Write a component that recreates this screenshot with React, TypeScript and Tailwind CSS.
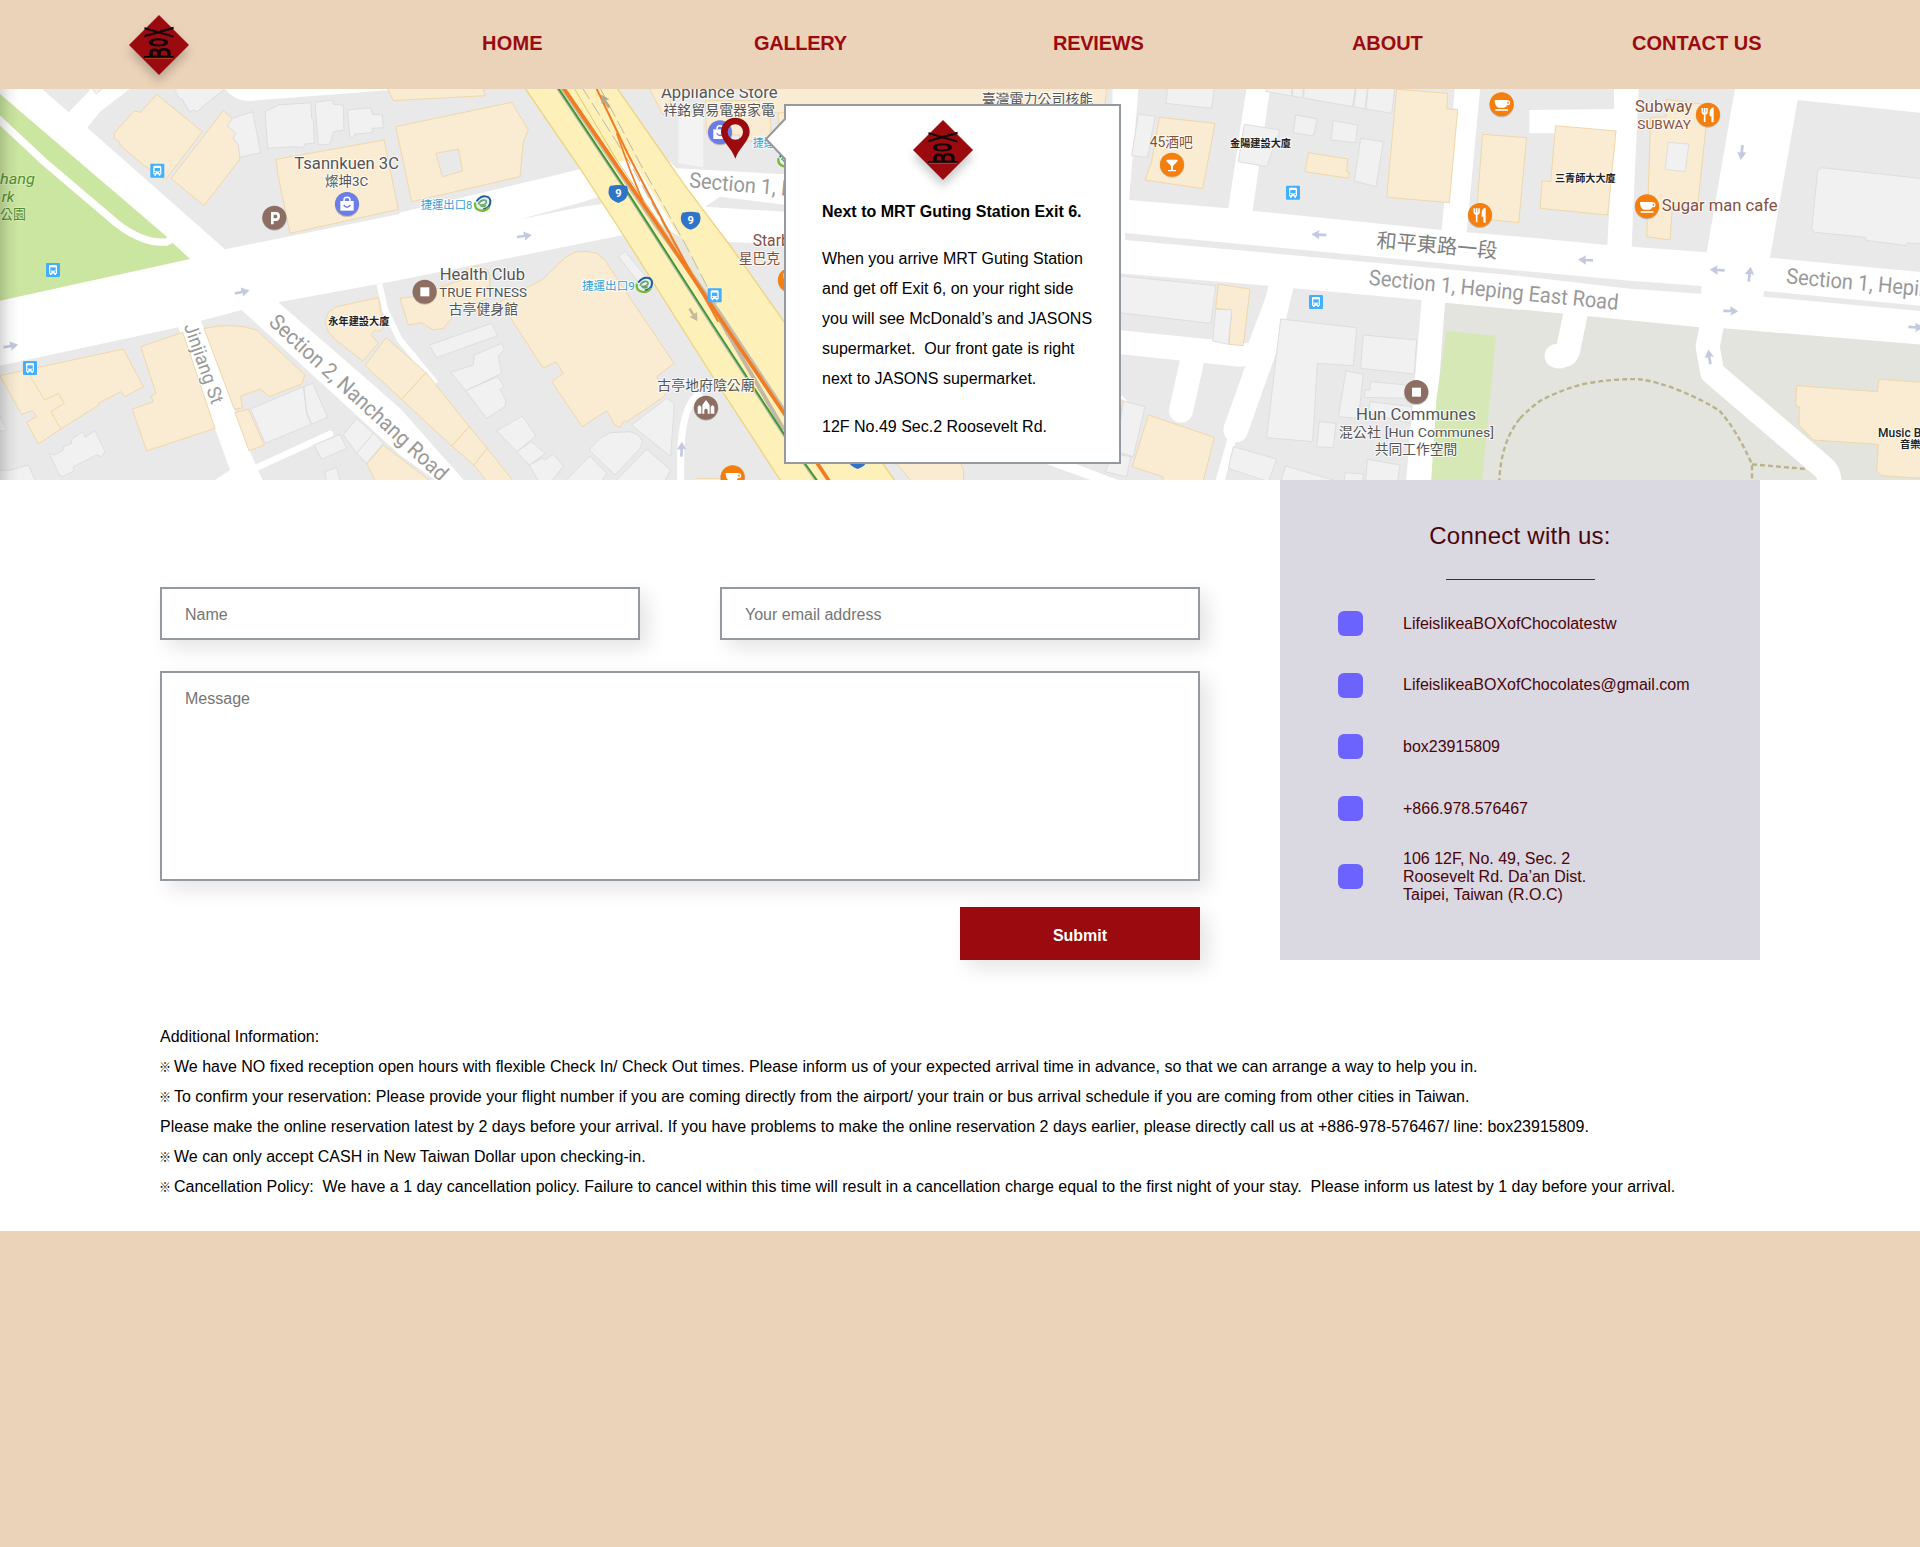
import React from "react";

const SANS = "font-['Liberation_Sans',Arial,sans-serif]";
const MAP_FONT = "Roboto, 'Noto Sans CJK TC', sans-serif";

type Pts = string[];

/* ---------- Brand mark ---------- */
function Logo() {
  return (
    <svg
      viewBox="0 0 60 60"
      className="block h-[60px] w-[60px] overflow-visible drop-shadow-[0_7px_5px_rgba(0,0,0,0.2)]"
    >
      <path d="M30 0L60 30L30 60L0 30Z" fill="#9b0a0f" />
      <g fontFamily="'Liberation Sans', Arial, sans-serif" fill="#120507" stroke="#120507">
        <text transform="translate(44.2 22.6) rotate(-90) scale(0.39 1)" fontSize="40.5" strokeWidth="1.2">X</text>
        <text transform="translate(38.3 31.4) rotate(-90) scale(0.44 1)" fontSize="24" strokeWidth="2.2">O</text>
        <text transform="translate(40.5 44) rotate(-90) scale(0.6 1)" fontSize="29" strokeWidth="1.4">B</text>
      </g>
      <path d="M15 42H44.6" stroke="#120507" strokeWidth="2" />
      <path d="M16 43.3H44" stroke="#b9763a" strokeWidth="0.6" />
    </svg>
  );
}

/* ---------- Map artwork (3 drawing units per pixel) ---------- */
function Shapes({ pts, kind }: { pts: Pts; kind: "tan" | "light" }) {
  const fill = kind === "tan" ? "#faecd3" : "#f1f1f1";
  const stroke = kind === "tan" ? "#efd8a9" : "#dedede";
  return (
    <g fill={fill} stroke={stroke} strokeWidth={3} strokeLinejoin="round">
      {pts.map((p) => (
        <polygon key={p} points={p} />
      ))}
    </g>
  );
}

const tanWest: Pts = [
  "470,43 607,155 497,298 433,257 360,195 358,185 343,175 343,160 402,93 422,97",
  "670,92 697,115 682,137 707,160 700,175 715,195 720,237 612,377 513,295",
  "828,238 1152,180 1195,388 870,460 834,285",
  "1160,20 1180,62 1457,47 1445,20",
  "0,887 370,807 430,920 375,950 363,935 295,970 295,976 185,1045 115,1092 80,1027 110,1010 97,992 65,1003",
  "422,800 548,757 645,1045 440,1113 397,987 460,965 453,948 468,940",
  "612,745 650,739 690,737 730,740 770,750 915,885 905,912 808,950 782,927 722,948 728,983 703,988",
  "705,998 745,987 793,1095 747,1112",
  "1135,653 1145,710 1150,745 1135,755 1125,750 1112,763 1135,790 1088,843 1005,778 985,755 975,725 985,697 1010,680",
  "1158,773 1278,878 1205,958 1095,857",
  "1278,878 1408,1040 1355,1098 1205,958",
  "1408,1040 1462,1105 1422,1155 1355,1098",
  "1462,1105 1545,1210 1465,1210 1422,1155",
  "1150,1095 1300,1210 1130,1210 1100,1152",
  "1187,140 1535,67 1585,150 1570,185 1560,290 1235,365 1200,200",
];
const lightWest: Pts = [
  "520,20 540,60 545,55 570,97 580,90 592,95 605,82 670,30 670,20",
  "275,20 288,42 315,20",
  "697,115 758,95 782,218 720,232 715,195 700,175 707,160 682,137",
  "795,95 835,75 933,68 935,115 940,118 943,190 915,192 910,203 882,200 803,205",
  "945,67 997,60 1000,73 1030,75 1032,150 1000,155 990,192 955,195",
  "1042,90 1112,83 1118,103 1147,105 1150,143 1118,145 1116,158 1065,162 1062,173 1050,173",
  "752,987 910,920 920,1000 933,1033 795,1090",
  "912,920 938,910 983,1012 935,1032 920,995",
  "148,1120 165,1125 192,1108 190,1100 215,1090 215,1078 248,1055 255,1072 285,1052 315,1115 305,1130 290,1125 220,1160 222,1172 190,1190 178,1185",
  "-5,1170 25,1172 85,1155 110,1210 -5,1210",
  "-5,1000 20,1050 -5,1055",
  "1070,1015 1120,1060 1070,1120 1030,1065",
  "1120,1060 1150,1090 1100,1150 1070,1120",
  "942,1095 1020,1063 1040,1105 965,1138",
  "975,1175 1010,1162 1022,1210 980,1210",
];
const courtyard: Pts = ["1308,220 1375,207 1388,273 1327,290"];
const tanMid: Pts = [
  "300,665 425,600 500,530 525,516 560,514 590,520 612,537 822,850 770,890 780,905 805,935 785,955 680,1025 672,1022 660,1042 645,1035 620,992 547,1040 455,905 490,880 468,845 430,865",
  "0,655 40,650 185,600 195,570 230,558 262,570 270,590 268,655 155,690 155,715 130,745 100,750 65,728 25,735",
  "745,20 790,105 830,20",
  "915,62 1112,62 1112,185 1020,182 1018,165 920,160",
  "1135,90 1200,90 1200,110 1135,130",
  "890,1195 960,1195 960,1210 880,1210",
];
const lightMid: Pts = [
  "88,795 275,730 293,767 110,833",
  "152,877 220,855 223,825 305,790 313,808 295,830 305,880 197,932",
  "197,932 293,890 313,920 300,928 318,962 315,980 260,1015",
  "290,1052 367,1008 408,1068 350,1115",
  "350,1115 395,1085 435,1120 388,1155",
  "388,1155 427,1135 435,1140 460,1122 490,1158 450,1210 420,1210",
  "567,1110 600,1075 630,1058 690,1055 715,1065 728,1085 720,1105 645,1185",
  "695,1035 800,955 823,970 812,1130",
  "655,530 675,513 735,588 715,605",
  "640,1210 740,1108 812,1170 790,1210",
  "490,1210 570,1128 620,1180 600,1210",
];
const tanEast: Pts = [
  "-1080,20 -40,20 -45,75 -1085,100",
  "118,112 285,130 248,326 75,300 95,245",
  "565,218 683,237 680,275 688,277 685,295 555,275",
  "830,28 983,40 980,87 1013,88 988,368 800,352",
  "1088,163 1220,173 1196,428 1068,415",
  "295,613 390,627 370,797 327,793 335,690 287,685",
  "85,1005 283,1072 248,1210 130,1210 128,1190 37,1160",
  "-675,1145 -480,1145 -470,1170 -468,1210 -620,1210",
  "-8,960 8,960 4,1000 -8,1000",
];
const lightEast: Pts = [
  "143,20 283,20 275,85 138,70",
  "55,103 105,108 83,232 35,227",
  "373,133 480,150 440,260 355,245",
  "440,20 515,20 515,48 438,34",
  "519,20 550,20 549,53 517,48",
  "553,20 707,20 698,80 551,54",
  "709,20 743,20 735,87 701,80",
  "745,20 825,20 815,100 738,87",
  "527,105 592,117 580,168 520,158",
  "640,122 713,135 707,188 633,180",
  "722,175 790,185 768,320 703,303",
  "-5,587 287,617 273,730 -5,698",
  "287,688 335,690 325,793 278,783",
  "482,717 710,743 700,857 592,850 578,1085 440,1073",
  "730,765 890,780 883,882 722,865",
  "678,873 730,883 715,1015 655,1010",
  "752,905 860,915 855,955 733,952 735,930 750,930",
  "750,965 875,980 870,1030 745,1000",
  "598,1025 648,1030 640,1103 590,1100",
  "10,963 75,980 40,1130 -10,1115",
  "-20,1120 32,1130 20,1190 -45,1175",
  "340,1100 470,1137 445,1205 325,1165",
  "497,1158 640,1200 640,1210 480,1210",
  "742,1138 840,1155 832,1210 736,1210",
  "675,1178 730,1182 728,1210 672,1210",
];
const tanFar: Pts = [
  "107,137 288,153 263,405 60,385 67,302 92,305",
  "440,58 565,75 532,385 457,380 450,480 380,470 386,300 392,112 438,110",
  "830,917 1073,935 1077,898 1210,907 1210,1195 1085,1187 1070,1175 1075,1093 880,1080 837,1035 838,980 827,978",
];
const lightFar: Pts = [
  "445,187 507,192 495,275 435,268",
  "905,263 1210,296 1210,492 1162,488 1160,497 1038,481 1036,472 885,457 875,448 893,272",
];

function MapLabel(p: {
  x: number; y: number; size: number; w?: number; rot?: number;
  fill?: string; weight?: number; italic?: boolean; halo?: string; children: string;
}) {
  return (
    <text
      transform={`translate(${p.x} ${p.y}) rotate(${p.rot ?? 0})`}
      fontFamily={MAP_FONT}
      fontSize={p.size}
      fontWeight={p.weight ?? 400}
      fontStyle={p.italic ? "italic" : undefined}
      textLength={p.w}
      lengthAdjust="spacingAndGlyphs"
      fill={p.fill ?? "#555555"}
      stroke={p.halo ?? "#ffffff"}
      strokeOpacity={0.8}
      strokeWidth={6}
      strokeLinejoin="round"
      paintOrder="stroke"
    >
      {p.children}
    </text>
  );
}

function Arrow({ x, y, rot, fill = "#c5c9df" }: { x: number; y: number; rot: number; fill?: string }) {
  return (
    <path transform={`translate(${x} ${y}) rotate(${rot})`} d="M-22 -4H-1V-14L23 0L-1 14L2 4H-22Z" fill={fill} />
  );
}

function Bus({ x, y }: { x: number; y: number }) {
  return (
    <g transform={`translate(${x} ${y})`}>
      <rect x={-21} y={-21} width={42} height={42} rx={3} fill="#41b0ff" />
      <path d="M-12 -11Q-12 -15 -7 -15H7Q12 -15 12 -11V11H9V15H4V11H-4V15H-9V11H-12Z" fill="#fff" />
      <rect x={-8} y={-8} width={16} height={10} fill="#41b0ff" />
      <path d="M-9 6H-5M5 6H9" stroke="#41b0ff" strokeWidth={4} />
    </g>
  );
}

function Metro({ x, y }: { x: number; y: number }) {
  return (
    <g transform={`translate(${x} ${y})`} fill="none" strokeLinecap="round">
      <circle r={22} fill="#e6f0f2" />
      <path d="M-17 -9C-4 -26 24 -28 23 -4C22 8 14 14 4 16" stroke="#1f5f9c" strokeWidth={6} />
      <path d="M-23 -1C-25 22 4 28 18 12" stroke="#78b833" strokeWidth={7} />
      <path d="M-12 0C-6 -13 12 -14 11 -5C10 2 0 4 -7 4C-4 10 4 9 8 6" stroke="#6aa46c" strokeWidth={5} />
    </g>
  );
}

type PoiKind = "p" | "bag" | "square" | "temple" | "cup" | "fork" | "bar";
function Poi({ x, y, kind }: { x: number; y: number; kind: PoiKind }) {
  const color =
    kind === "bag" ? "#6b7de6" : kind === "p" || kind === "square" || kind === "temple" ? "#8d6e63" : "#f57f0c";
  return (
    <g transform={`translate(${x} ${y})`}>
      <circle cy={2} r={37} fill="#000" opacity={0.18} />
      <circle r={36} fill={color} />
      {kind === "p" && <path d="M-6 20V-13H5Q13 -13 13 -4Q13 6 4 6H-6" fill="none" stroke="#fff" strokeWidth={8} />}
      {kind === "bag" && (
        <>
          <path d="M-20 -9H20V20H-20Z" fill="#fff" />
          <path d="M-9 -9V-12Q-9 -20 0 -20Q9 -20 9 -12V-9" fill="none" stroke="#fff" strokeWidth={4.5} />
          <path d="M-10 3Q0 16 10 3" fill="none" stroke="#6b7de6" strokeWidth={4.5} />
        </>
      )}
      {kind === "square" && <rect x={-13} y={-13} width={27} height={27} fill="#fff" />}
      {kind === "temple" && (
        <path d="M-25 18V-2Q-20 -12 -14 -2V18ZM14 18V-2Q20 -12 25 -2V18ZM-11 18V-8L0 -23L11 -8V18H5V6Q0 0 -5 6V18Z" fill="#fff" />
      )}
      {kind === "cup" && (
        <>
          <path d="M-21 -13H17V-3Q17 9 6 10H-8Q-21 8 -21 -13Z" fill="#fff" />
          <circle cx={18} cy={-5} r={5.5} fill="none" stroke="#fff" strokeWidth={4} />
          <path d="M-19 17H19" stroke="#fff" strokeWidth={5} />
        </>
      )}
      {kind === "fork" && (
        <>
          <path d="M-17 -20V-9Q-17 -3 -10 -3Q-3 -3 -3 -9V-20M-10 -20V22" fill="none" stroke="#fff" strokeWidth={5} />
          <path d="M17 -22V23H10V5H5V-8Q6 -20 17 -22Z" fill="#fff" />
        </>
      )}
      {kind === "bar" && <path d="M-17 -15H17V-11L3 4V16H12V20H-12V16H-3V4L-17 -11Z" fill="#fff" />}
    </g>
  );
}

function Shield({ x, y }: { x: number; y: number }) {
  return (
    <g transform={`translate(${x} ${y})`}>
      <path d="M-25 -22Q0 -28 25 -22Q32 -10 28 5Q22 22 0 29Q-22 22 -28 5Q-32 -10 -25 -22Z" fill="#2f74c8" />
      <text y={12} textAnchor="middle" fontFamily="Roboto, sans-serif" fontWeight={700} fontSize={33} fill="#fff">9</text>
    </g>
  );
}

const BROWN = "#84503f";
const ROAD = "#999999";

function StreetMap() {
  return (
    <svg viewBox="0 27 5760 1173" className="block h-[391px] w-full" preserveAspectRatio="none">
      <defs>
        <linearGradient id="edge" x1="0" x2="1" y1="0" y2="0">
          <stop offset="0" stopColor="#000" stopOpacity={0.16} />
          <stop offset="0.5" stopColor="#000" stopOpacity={0.05} />
          <stop offset="1" stopColor="#000" stopOpacity={0} />
        </linearGradient>
      </defs>
      <rect x={0} y={0} width={5760} height={1200} fill="#e9e9e9" />

      {/* west: park, crossing and side streets */}
      <g fill="#fff">
        <path d="M0 20H118L206 97L268 33V20H398L300 95L262 143L675 508L1200 402V600L835 667L1200 985L1400 1210H1320L1200 1125L725 690L603 722L750 1115L792 1210H630L690 1170L645 1045L535 742L0 857Z" />
        <path d="M670 20Q700 62 745 63L1170 30V20Z" />
        <path d="M765 1165L990 1062" stroke="#fff" strokeWidth={20} strokeLinecap="round" />
        <path d="M1138 612L1156 690L1200 780L1308 910" fill="none" stroke="#fff" strokeWidth={18} />
      </g>
      <path d="M0 42L498 468L515 486L570 537L0 662Z" fill="#cbe6a0" />
      <path d="M-10 112L130 243L350 430Q430 492 500 486L515 478" fill="none" stroke="#fff" strokeWidth={22} />
      <Shapes pts={tanWest} kind="tan" />
      <Shapes pts={lightWest} kind="light" />
      <g fill="#e9e9e9" stroke="#efd8a9" strokeWidth={3}>
        {courtyard.map((p) => (
          <polygon key={p} points={p} />
        ))}
      </g>
      <path d="M90 887L133 960L175 940L193 970L153 995L183 1048" fill="none" stroke="#efd8a9" strokeWidth={3} />

      {/* Roosevelt Road corridor */}
      <g transform="translate(1200 0)">
        <path d="M835 100H910V262L835 250Z" fill="#f3f3f3" />
        <path d="M-2 398L540 268L655 240L800 238L830 265L1200 285V380L960 350L915 380L1200 398V495L1000 487L670 465L-2 600Z" fill="#fff" />
        <path d="M360 418L540 368L605 348V372L540 382Z" fill="#e9e9e9" />
        <path d="M842 1210V1110Q850 960 905 940" fill="none" stroke="#fff" strokeWidth={21} />
        <Shapes pts={tanMid} kind="tan" />
        <Shapes pts={lightMid} kind="light" />
        <path d="M372 20L540 265L670 465L935 885L1147 1210H1490L1152 725L1000 510L850 310L648 20Z" fill="#fdf0b8" stroke="#eed382" strokeWidth={4} />
        <path d="M648 243H700L765 350L840 475L770 425Z" fill="#fff" />
        <path d="M770 425L845 475L900 580L970 715L1010 800L930 670Z" fill="#e9e6dc" />
        <g fill="none">
          <path d="M520 20L650 240L900 610" stroke="#e2c76c" strokeWidth={3} />
          <path d="M545 20L690 250L860 560L960 715" stroke="#bdb9ac" strokeWidth={3} strokeDasharray="44 14" />
          <path d="M598 20L720 250L860 500L970 715" stroke="#bdb9ac" strokeWidth={3} strokeDasharray="44 14" />
          <path d="M483 20L770 440L960 700L1152 990" stroke="#c4bda9" strokeWidth={11} />
          <path d="M960 720L1152 1050" stroke="#c2b8a4" strokeWidth={12} />
          <path d="M470 20L680 335L940 740L1152 1065L1255 1210" stroke="#b3b4a9" strokeWidth={9} />
          <path d="M472 20L682 335L942 740L1154 1065L1257 1210" stroke="#359a28" strokeWidth={5} />
          <path d="M488 20L680 300L770 430L960 715L1152 1000L1292 1210" stroke="#f27b22" strokeWidth={11} />
          <path d="M587 20L685 225L790 425L890 610L955 725" stroke="#f27b22" strokeWidth={6} />
          <path d="M650 160L690 270L735 380L770 430" stroke="#f27b22" strokeWidth={5} />
        </g>
      </g>

      {/* Heping East Road */}
      <g transform="translate(3360 0)">
        <path d="M1160 640L2400 780V1210H930L975 660Z" fill="#e2e4dd" />
        <g fill="#fff">
          <path d="M-22 20H56L27 360L325 385L380 20H451L398 392L965 450L1005 20H1081L1040 457L1202 470V690L975 668L935 1210H858L905 660L520 625L445 617L-5 580V480L-30 458Z" />
          <path d="M-5 750L385 790L450 617L520 625L450 850L360 860L-5 822Z" />
          <path d="M483 620L450 760L347 1050" stroke="#fff" strokeWidth={74} strokeLinecap="round" fill="none" />
          <path d="M219 830L183 992" stroke="#fff" strokeWidth={72} strokeLinecap="round" />
          <path d="M336 1075L298 1210" stroke="#fff" strokeWidth={26} />
          <path d="M-5 938L22 962L-5 962ZM-240 1145H-150L20 1210H-60Z" />
        </g>
        <path d="M15 459L1202 572V588L15 480Z" fill="#e9e9e9" />
        <path d="M980 753L1128 768L1085 1210H933L950 950Z" fill="#d5e8b5" />
        <path d="M1138 1210Q1140 1090 1200 1015" fill="none" stroke="#b9b28a" strokeWidth={7} strokeDasharray="15 9" />
        <Shapes pts={tanEast} kind="tan" />
        <Shapes pts={lightEast} kind="light" />
      </g>

      <g transform="translate(4560 0)">
        <g fill="#fff">
          <path d="M-2 470L262 495L280 160H28V90L282 87V20H356L335 500L560 517L646 20H1210V99L833 60L750 533L1210 577V794L612 745L538 742L-2 688Z" />
          <path d="M167 700L142 820" stroke="#fff" strokeWidth={73} />
          <path d="M178 815A46 46 0 0 1 140 860Q118 870 98 862A36 36 0 0 1 112 792Z" />
          <path d="M576 735L563 800L577 878L910 1162Q930 1180 930 1215" fill="none" stroke="#fff" strokeWidth={72} strokeLinejoin="round" />
        </g>
        <path d="M-2 572L330 602L545 618L543 641L330 626L-2 588ZM733 633L1210 678V694L730 650Z" fill="#e9e9e9" />
        <path d="M0 1015Q30 985 60 963Q120 930 190 912Q280 895 360 898Q410 905 470 928Q560 965 600 994Q650 1050 696 1153V1210M696 1153L858 1167" fill="none" stroke="#b9b28a" strokeWidth={7} strokeDasharray="15 9" />
        <Shapes pts={tanFar} kind="tan" />
        <Shapes pts={lightFar} kind="light" />
      </g>

      {/* direction arrows */}
      <Arrow x={726} y={636} rot={-12} />
      <Arrow x={32} y={798} rot={-10} />
      <Arrow x={1573} y={468} rot={-8} />
      <Arrow x={2045} y={1108} rot={-88} />
      <Arrow x={2080} y={704} rot={58} fill="#c4bb9c" />
      <Arrow x={1816} y={64} rot={-122} fill="#b3a888" />
      <Arrow x={3957} y={464} rot={184} />
      <Arrow x={4757} y={540} rot={183} />
      <Arrow x={5152} y={570} rot={183} />
      <Arrow x={5225} y={217} rot={97} />
      <Arrow x={5249} y={583} rot={-82} />
      <Arrow x={5192} y={693} rot={1} />
      <Arrow x={5128} y={831} rot={-98} />
      <Arrow x={5747} y={742} rot={3} />

      {/* stops, shields and places */}
      <Bus x={472} y={272} />
      <Bus x={159} y={570} />
      <Bus x={90} y={864} />
      <Bus x={2144} y={646} />
      <Bus x={3879} y={338} />
      <Bus x={3948} y={666} />
      <Shield x={1855} y={340} />
      <Shield x={2072} y={420} />
      <Shield x={2573} y={1138} />
      <Poi x={823} y={413} kind="p" />
      <Poi x={1041} y={372} kind="bag" />
      <Poi x={2160} y={157} kind="bag" />
      <Poi x={1274} y={635} kind="square" />
      <Poi x={4249} y={936} kind="square" />
      <Poi x={2118} y={983} kind="temple" />
      <Poi x={2198} y={1192} kind="cup" />
      <Poi x={4505} y={73} kind="cup" />
      <Poi x={4941} y={379} kind="cup" />
      <Poi x={2370} y={600} kind="fork" />
      <Poi x={4440} y={405} kind="fork" />
      <Poi x={5124} y={104} kind="fork" />
      <Poi x={3516} y={254} kind="bar" />

      {/* labels */}
      <MapLabel x={883} y={268} size={50} w={314}>Tsannkuen 3C</MapLabel>
      <MapLabel x={975} y={318} size={41} w={130}>燦坤3C</MapLabel>
      <MapLabel x={0} y={312} size={46} w={105} italic fill="#558f2c" halo="#dcf0c0">hang</MapLabel>
      <MapLabel x={5} y={366} size={46} w={38} italic fill="#558f2c" halo="#dcf0c0">rk</MapLabel>
      <MapLabel x={0} y={418} size={40} w={78} fill="#558f2c" halo="#dcf0c0">公園</MapLabel>
      <MapLabel x={551} y={738} size={57} w={252} rot={70.5} fill={ROAD}>Jinjiang St</MapLabel>
      <MapLabel x={803} y={731} size={65} w={702} rot={42.6} fill={ROAD}>Section 2, Nanchang Road</MapLabel>
      <MapLabel x={985} y={735} size={31} w={183} weight={700} fill="#222">永年建設大廈</MapLabel>
      <MapLabel x={1262} y={386} size={33} w={155} fill="#35a0d6">捷運出口8</MapLabel>
      <MapLabel x={1746} y={630} size={33} w={158} fill="#35a0d6">捷運出口9</MapLabel>
      <MapLabel x={2258} y={201} size={33} w={130} fill="#35a0d6">捷運出口</MapLabel>
      <MapLabel x={1983} y={53} size={50} w={350}>Appliance Store</MapLabel>
      <MapLabel x={1990} y={105} size={42} w={335}>祥銘貿易電器家電</MapLabel>
      <MapLabel x={2066} y={322} size={64} w={752} rot={5} fill={ROAD}>Section 1, Heping East Road</MapLabel>
      <MapLabel x={2258} y={497} size={48} w={210} fill={BROWN}>Starbucks</MapLabel>
      <MapLabel x={2216} y={548} size={42} w={124} fill={BROWN}>星巴克</MapLabel>
      <MapLabel x={1319} y={600} size={50} w={256}>Health Club</MapLabel>
      <MapLabel x={1318} y={650} size={41} w={263}>TRUE FITNESS</MapLabel>
      <MapLabel x={1346} y={702} size={42} w={208}>古亭健身館</MapLabel>
      <MapLabel x={1972} y={931} size={42} w={292}>古亭地府陰公廟</MapLabel>
      <MapLabel x={2945} y={71} size={42} w={335}>臺灣電力公司核能</MapLabel>
      <MapLabel x={3449} y={202} size={42} w={130} fill={BROWN}>45酒吧</MapLabel>
      <MapLabel x={3690} y={201} size={31} w={183} weight={700} fill="#222">金陽建設大廈</MapLabel>
      <MapLabel x={4128} y={502} size={61} w={364} rot={5} fill="#808080">和平東路一段</MapLabel>
      <MapLabel x={4105} y={614} size={65} w={752} rot={5.8} fill={ROAD}>Section 1, Heping East Road</MapLabel>
      <MapLabel x={4068} y={1020} size={50} w={360}>Hun Communes</MapLabel>
      <MapLabel x={4016} y={1071} size={41} w={466}>混公社 [Hun Communes]</MapLabel>
      <MapLabel x={4124} y={1122} size={41} w={248}>共同工作空間</MapLabel>
      <MapLabel x={4905} y={97} size={50} w={172} fill={BROWN}>Subway</MapLabel>
      <MapLabel x={4912} y={147} size={41} w={161} fill={BROWN}>SUBWAY</MapLabel>
      <MapLabel x={4665} y={305} size={31} w={182} weight={700} fill="#222">三青師大大廈</MapLabel>
      <MapLabel x={4985} y={394} size={50} w={348} fill={BROWN}>Sugar man cafe</MapLabel>
      <MapLabel x={5357} y={610} size={65} w={752} rot={5.3} fill={ROAD}>Section 1, Heping East Road</MapLabel>
      <MapLabel x={5634} y={1070} size={36} weight={500} fill="#222">Music Building</MapLabel>
      <MapLabel x={5700} y={1105} size={31} weight={700} fill="#222">音樂館</MapLabel>

      <Metro x={1448} y={371} />
      <Metro x={1933} y={615} />
      <Metro x={2358} y={238} />

      <rect x={0} y={27} width={56} height={1173} fill="url(#edge)" />
      <path d="M2206 236C2196 205 2163 182 2163 156A43 43 0 0 1 2249 156C2249 182 2216 205 2206 236ZM2206 133A23 23 0 1 0 2206 179A23 23 0 1 0 2206 133Z" fill="#9b0a0f" fillRule="evenodd" />
    </svg>
  );
}

/* ---------- Page sections ---------- */
const navItems = [
  { label: "HOME", tracking: "tracking-[0.2px]" },
  { label: "GALLERY", tracking: "tracking-[-0.3px]" },
  { label: "REVIEWS", tracking: "tracking-[-0.25px]" },
  { label: "ABOUT", tracking: "tracking-[-0.1px]" },
  { label: "CONTACT US", tracking: "tracking-normal" },
];

function Header() {
  return (
    <header className="flex h-[89px] items-start bg-[#ebd3b9] pl-[129px]">
      <div className="relative z-10 mt-[15px] shrink-0">
        <Logo />
      </div>
      <nav className="ml-[293px] mt-[28px] grid grid-cols-[272px_299px_299px_280px_140px] text-[20px] font-bold leading-[30px] text-[#9b0a0f]">
        {navItems.map((n) => (
          <a key={n.label} className={`whitespace-nowrap ${n.tracking}`}>
            {n.label}
          </a>
        ))}
      </nav>
    </header>
  );
}

function LocationCard() {
  return (
    <div className="absolute left-[784px] top-[15px] flex h-[360px] w-[337px] flex-col border-2 border-[#93999e] bg-white pl-9 text-base leading-[30px] text-black">
      <svg viewBox="0 0 22 44" className="absolute -left-[22px] top-[11px] h-[44px] w-[22px]">
        <path d="M22 1L2 22L22 43Z" fill="#fff" />
        <path d="M21.5 1.5L2 22L21.5 42.5" fill="none" stroke="#93999e" strokeWidth="2" />
      </svg>
      <div className="ml-[91px] mt-[14px] h-[60px]">
        <Logo />
      </div>
      <p className="mt-[17px] font-bold">Next to MRT Guting Station Exit 6.</p>
      <p className="mt-[17px] whitespace-pre">
        {"When you arrive MRT Guting Station\nand get off Exit 6, on your right side\nyou will see McDonald’s and JASONS\nsupermarket.  Our front gate is right\nnext to JASONS supermarket."}
      </p>
      <p className="mt-[18px]">12F No.49 Sec.2 Roosevelt Rd.</p>
    </div>
  );
}

const fieldBase =
  "block border-2 border-[#93999e] bg-white px-[23px] text-base text-black shadow-[8px_8px_20px_rgba(0,0,0,0.11)] outline-none placeholder:text-[#757575] placeholder:opacity-100";

function ContactForm() {
  return (
    <form className="mt-[107px] w-[1040px]">
      <div className="flex gap-20">
        <input className={`${fieldBase} h-[53px] w-[480px] pt-[2px]`} placeholder="Name" />
        <input className={`${fieldBase} h-[53px] w-[480px] pt-[2px]`} placeholder="Your email address" />
      </div>
      <textarea
        className={`${fieldBase} relative mt-[31px] h-[210px] w-full resize-none pt-[15px] leading-[22px]`}
        placeholder="Message"
      />
      <button
        type="button"
        className="relative ml-auto mt-[26px] block h-[53px] w-60 bg-[#9b0a0f] pt-[4px] text-base font-bold text-white shadow-[8px_8px_20px_rgba(0,0,0,0.11)]"
      >
        Submit
      </button>
    </form>
  );
}

const contacts = [
  "LifeislikeaBOXofChocolatestw",
  "LifeislikeaBOXofChocolates@gmail.com",
  "box23915809",
  "+866.978.576467",
];

function ConnectPanel() {
  return (
    <aside className="flex h-[480px] w-[480px] flex-col bg-[#dad8e1] text-[#4a0509]">
      <h2 className="mt-[41px] text-center text-2xl leading-[30px] tracking-[0.25px]">Connect with us:</h2>
      <div className="mx-auto mt-[28px] h-px w-[149px] bg-[#9b0a0f]" />
      <ul className="mt-[13px] pl-[58px] text-base leading-[18px]">
        {contacts.map((c) => (
          <li key={c} className="flex h-[61.6px] items-center gap-10">
            <span className="h-[25px] w-[25px] rounded-[6px] bg-[#6c63ff]" />
            <span>{c}</span>
          </li>
        ))}
        <li className="mt-[11px] flex items-center gap-10">
          <span className="mb-[2px] h-[25px] w-[25px] rounded-[6px] bg-[#6c63ff]" />
          <span className="whitespace-pre">{"106 12F, No. 49, Sec. 2\nRoosevelt Rd. Da’an Dist.\nTaipei, Taiwan (R.O.C)"}</span>
        </li>
      </ul>
    </aside>
  );
}

const infoLines: { mark: boolean; text: string }[] = [
  { mark: false, text: "Additional Information:" },
  { mark: true, text: "We have NO fixed reception open hours with flexible Check In/ Check Out times. Please inform us of your expected arrival time in advance, so that we can arrange a way to help you in." },
  { mark: true, text: "To confirm your reservation: Please provide your flight number if you are coming directly from the airport/ your train or bus arrival schedule if you are coming from other cities in Taiwan." },
  { mark: false, text: "Please make the online reservation latest by 2 days before your arrival. If you have problems to make the online reservation 2 days earlier, please directly call us at +886-978-576467/ line: box23915809." },
  { mark: true, text: "We can only accept CASH in New Taiwan Dollar upon checking-in." },
  { mark: true, text: "Cancellation Policy:  We have a 1 day cancellation policy. Failure to cancel within this time will result in a cancellation charge equal to the first night of your stay.  Please inform us latest by 1 day before your arrival." },
];

function Info() {
  return (
    <section className="mt-[62px] h-[209px] pl-40 text-base leading-[30px] text-black">
      {infoLines.map((l) => (
        <p key={l.text} className="flex h-[30px] whitespace-pre">
          {l.mark && (
            <span className="-ml-px w-[15px] font-['Noto_Sans_CJK_TC',sans-serif] text-[12px] font-bold">※</span>
          )}
          <span>{l.text}</span>
        </p>
      ))}
    </section>
  );
}

export default function App() {
  return (
    <div className={`${SANS} flex h-[1547px] w-[1920px] flex-col overflow-hidden bg-white`}>
      <Header />
      <section className="relative h-[391px] shrink-0">
        <StreetMap />
        <LocationCard />
      </section>
      <section className="flex gap-20 pl-40">
        <ContactForm />
        <ConnectPanel />
      </section>
      <Info />
      <footer className="flex-1 bg-[#ebd3b9]" />
    </div>
  );
}
